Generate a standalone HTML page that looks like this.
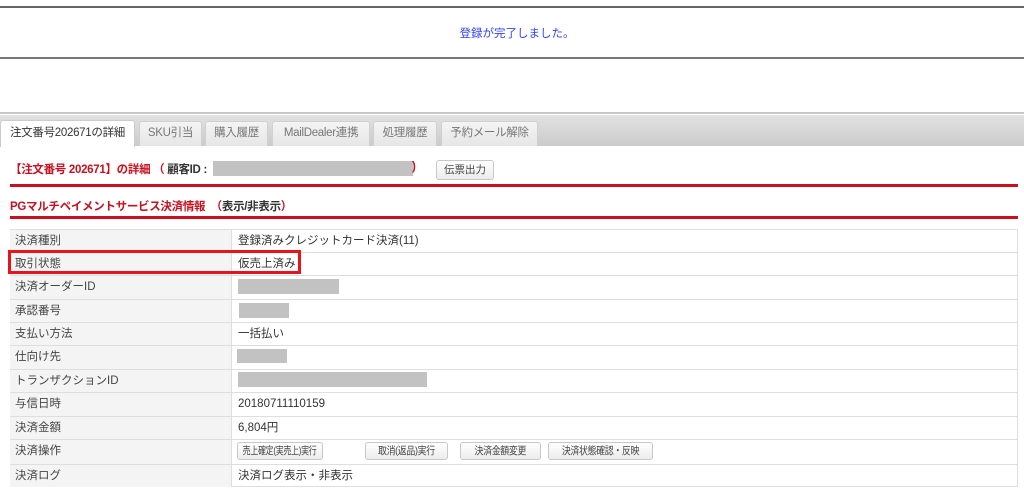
<!DOCTYPE html>
<html><head><meta charset="utf-8">
<style>
*{margin:0;padding:0;box-sizing:border-box}
body{width:1024px;height:493px;background:#fff;position:relative;overflow:hidden;font-family:"Liberation Sans","Noto Sans CJK JP",sans-serif;font-size:11.5px;color:#333}
.a{position:absolute}
.tab{position:absolute;top:121px;height:25px;background:linear-gradient(#f4f4f4,#e6e6e6);border:1px solid #d0d0d0;border-bottom:none;border-radius:3px 3px 0 0;color:#777;font-size:11.5px;text-align:center;line-height:23px;white-space:nowrap;letter-spacing:-0.3px}
.row{position:absolute;left:10px;width:1008px;border-top:1px solid #dedede;height:24px}
.row .k{position:absolute;left:0;top:0;width:222px;height:100%;background:#f4f4f4;border-right:1px solid #dedede;padding-left:5px;line-height:22px;color:#444}
.row .v{position:absolute;left:228px;top:0;line-height:22px;color:#333}
.g{position:absolute;background:#c2c2c2}
.btn{position:absolute;top:2px;height:18px;border:1px solid #c8c8c8;border-radius:3px;background:linear-gradient(#fff,#ececec);font-size:10.5px;line-height:16px;color:#444;letter-spacing:-0.4px;white-space:nowrap;display:flex;justify-content:center}
.btn span{display:block;flex:none;transform:scaleX(0.85);transform-origin:center}
</style></head><body>
<div class="a" style="left:0;top:6px;width:1024px;height:2px;background:#666"></div>
<div class="a" style="left:0;top:57px;width:1024px;height:2px;background:#777"></div>
<div class="a" style="left:0;top:25px;width:1024px;text-align:center;color:#3344ee;font-size:11.5px;padding-left:10px">登録が完了しました。</div>
<div class="a" style="left:0;top:112px;width:1024px;height:2px;background:#c8c8c8"></div>
<div class="a" style="left:0;top:115px;width:1024px;height:31px;background:linear-gradient(#e2e2e2,#cbcbcb)"></div>
<div class="tab" style="left:0;width:135px;background:#fff;color:#333;border-color:#ccc;top:120px;height:27px;line-height:24px">注文番号202671の詳細</div>
<div class="tab" style="left:139px;width:63px">SKU引当</div>
<div class="tab" style="left:205px;width:63px">購入履歴</div>
<div class="tab" style="left:272px;width:98px">MailDealer連携</div>
<div class="tab" style="left:373px;width:64px">処理履歴</div>
<div class="tab" style="left:441px;width:97px">予約メール解除</div>

<div class="a" style="left:10px;top:161px;font-weight:bold;color:#c8101e;font-size:11.5px;letter-spacing:-0.3px;white-space:nowrap">【注文番号 202671】の詳細 （ <span style="color:#333">顧客ID :</span></div>
<div class="g" style="left:213px;top:161px;width:200px;height:15px"></div>
<div class="a" style="left:412px;top:161px;font-weight:bold;color:#c8101e">)</div>
<div class="a" style="left:436px;top:160px;width:58px;height:20px;border:1px solid #c8c8c8;border-radius:3px;background:linear-gradient(#fff,#ececec);font-size:10.5px;text-align:center;line-height:18px;color:#444">伝票出力</div>
<div class="a" style="left:10px;top:184px;width:1008px;height:3px;background:#c8101e"></div>
<div class="a" style="left:10px;top:198px;font-weight:bold;color:#c8101e;font-size:11.5px;letter-spacing:-0.3px;white-space:nowrap">PGマルチペイメントサービス決済情報　（<span style="color:#333">表示/非表示</span>）</div>
<div class="a" style="left:10px;top:216px;width:1008px;height:3px;background:#c8101e"></div>

<div class="a" style="left:10px;top:229px;width:1008px;height:258px;border:1px solid #dedede;border-top:none"></div>
<div class="row" style="top:229px;height:23px"><div class="k">決済種別</div><div class="v">登録済みクレジットカード決済(11)</div></div>
<div class="row" style="top:252px;height:23px"><div class="k">取引状態</div><div class="v">仮売上済み</div></div>
<div class="row" style="top:275px;height:24px"><div class="k">決済オーダーID</div><div class="g" style="left:228px;top:3px;width:101px;height:15px"></div></div>
<div class="row" style="top:299px;height:23px"><div class="k">承認番号</div><div class="g" style="left:229px;top:3px;width:50px;height:15px"></div></div>
<div class="row" style="top:322px;height:23px"><div class="k">支払い方法</div><div class="v">一括払い</div></div>
<div class="row" style="top:345px;height:24px"><div class="k">仕向け先</div><div class="g" style="left:227px;top:3px;width:50px;height:14px"></div></div>
<div class="row" style="top:369px;height:23px"><div class="k">トランザクションID</div><div class="g" style="left:228px;top:2px;width:189px;height:15px"></div></div>
<div class="row" style="top:392px;height:24px"><div class="k">与信日時</div><div class="v">20180711110159</div></div>
<div class="row" style="top:416px;height:23px"><div class="k">決済金額</div><div class="v">6,804円</div></div>
<div class="row" style="top:439px;height:25px"><div class="k">決済操作</div>
<div class="btn" style="left:227px;width:86px"><span style="transform:scaleX(0.76)">売上確定(実売上)実行</span></div>
<div class="btn" style="left:355px;width:83px"><span>取消(返品)実行</span></div>
<div class="btn" style="left:450px;width:81px"><span>決済金額変更</span></div>
<div class="btn" style="left:538px;width:105px"><span>決済状態確認・反映</span></div></div>
<div class="row" style="top:464px;height:23px"><div class="k">決済ログ</div><div class="v">決済ログ表示・非表示</div></div>
<div class="a" style="left:8px;top:250px;width:293px;height:24px;border:3px solid #e8141d"></div>
</body></html>
